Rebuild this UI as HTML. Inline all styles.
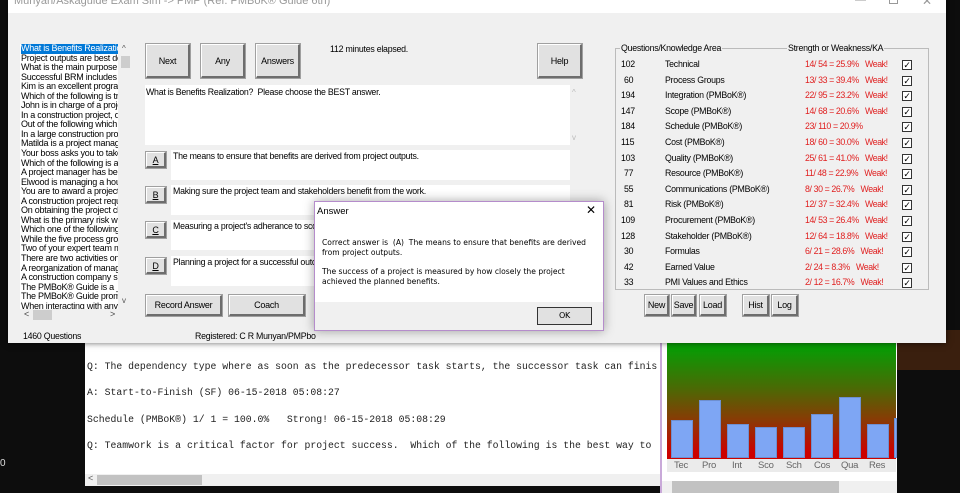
<!DOCTYPE html>
<html><head><meta charset="utf-8"><style>
*{margin:0;padding:0;box-sizing:border-box}
body{width:960px;height:493px;overflow:hidden;background:#0d0d0d;position:relative;font-family:"Liberation Sans",sans-serif;font-size:8.8px;letter-spacing:-.25px;color:#000}
.a{position:absolute;white-space:nowrap}
.btn{position:absolute;background:#e1e1e1;border:1px solid #fff;border-right:2px solid #6d6d6d;border-bottom:2px solid #6d6d6d;outline:1px solid #a0a0a0;display:flex;align-items:center;justify-content:center;font-size:9px}
.box{position:absolute;background:#fff;white-space:nowrap}
.mono{font-family:"Liberation Mono",monospace;font-size:9.8px;letter-spacing:0;color:#222;white-space:pre}
.red{color:#e02020}
.cb{position:absolute;width:10px;height:10px;border:1px solid #333;background:#fff;font-size:9px;line-height:8px;text-align:center}
.bar{position:absolute;background:#7ea6f4;border:1px solid #6e8fd0;width:22px}
</style></head><body>
<!-- background terminal -->
<div class="box" style="left:85px;top:330px;width:575px;height:156px"></div>
<div class="a mono" style="left:87px;top:333px">Cost (PMBoK®) 6/ 1 = 0.0%   Weak! 06-15-2018 05:08:25</div>
<div class="a mono" style="left:87px;top:361px">Q: The dependency type where as soon as the predecessor task starts, the successor task can finis</div>
<div class="a mono" style="left:87px;top:387px">A: Start-to-Finish (SF) 06-15-2018 05:08:27</div>
<div class="a mono" style="left:87px;top:414px">Schedule (PMBoK®) 1/ 1 = 100.0%   Strong! 06-15-2018 05:08:29</div>
<div class="a mono" style="left:87px;top:440px">Q: Teamwork is a critical factor for project success.  Which of the following is the best way to</div>
<div class="a" style="left:85px;top:474px;width:575px;height:12px;background:#f0f0f0"></div>
<div class="a" style="left:97px;top:475px;width:105px;height:10px;background:#c2c2c2"></div>
<div class="a" style="left:88px;top:473px;font-size:9px;color:#555">&lt;</div>
<div class="a" style="left:0;top:458px;color:#ddd;font-size:10px">0</div>
<!-- chart window -->
<div class="a" style="left:660px;top:330px;width:237px;height:163px;background:#fff;border-left:2px solid #c9a9d9"></div>
<div class="a" style="left:667px;top:330px;width:229px;height:129px;background:linear-gradient(#05a005 0%,#0a9a05 15%,#4a6a05 45%,#8a3a05 70%,#c00 95%)"></div>
<div class="bar" style="left:671px;top:420px;height:38px"></div>
<div class="bar" style="left:699px;top:400px;height:58px"></div>
<div class="bar" style="left:727px;top:424px;height:34px"></div>
<div class="bar" style="left:755px;top:427px;height:31px"></div>
<div class="bar" style="left:783px;top:427px;height:31px"></div>
<div class="bar" style="left:811px;top:414px;height:44px"></div>
<div class="bar" style="left:839px;top:397px;height:61px"></div>
<div class="bar" style="left:867px;top:424px;height:34px"></div>
<div class="bar" style="left:894px;top:418px;height:40px;width:3px"></div>
<div class="a" style="left:667px;top:459px;width:229px;height:13px;background:#ebebeb"></div>
<div class="a" style="left:674px;top:460px;font-size:9.5px;color:#666">Tec</div>
<div class="a" style="left:702px;top:460px;font-size:9.5px;color:#666">Pro</div>
<div class="a" style="left:732px;top:460px;font-size:9.5px;color:#666">Int</div>
<div class="a" style="left:758px;top:460px;font-size:9.5px;color:#666">Sco</div>
<div class="a" style="left:786px;top:460px;font-size:9.5px;color:#666">Sch</div>
<div class="a" style="left:814px;top:460px;font-size:9.5px;color:#666">Cos</div>
<div class="a" style="left:841px;top:460px;font-size:9.5px;color:#666">Qua</div>
<div class="a" style="left:869px;top:460px;font-size:9.5px;color:#666">Res</div>
<div class="a" style="left:662px;top:481px;width:235px;height:12px;background:#f0f0f0"></div>
<div class="a" style="left:672px;top:481px;width:167px;height:12px;background:#c2c2c2"></div>
<div class="a" style="left:897px;top:330px;width:63px;height:40px;background:#3a1f0e"></div>

<!-- main window -->
<div class="a" style="left:8px;top:0;width:938px;height:343px;background:#f0f0f0;box-shadow:0 0 6px rgba(0,0,0,.6)"></div>
<div class="a" style="left:8px;top:0;width:938px;height:13px;background:#fff"></div>
<div class="a" style="left:14px;top:-5px;font-size:11px;color:#999;letter-spacing:0">Munyan/Askaguide Exam Sim -&gt;  PMP (Ref. PMBoK® Guide 6th)</div>
<div class="a" style="left:855px;top:-6px;font-size:11px;color:#999">—</div>
<div class="a" style="left:889px;top:-4px;width:9px;height:8px;border:1px solid #999"></div>
<div class="a" style="left:922px;top:-6px;font-size:12px;color:#999">✕</div>

<!-- left list -->
<div class="box" style="left:20px;top:44px;width:98px;height:265px;overflow:hidden;line-height:9.55px;font-size:9px;padding-left:1px">
<div style="background:#0078d7;color:#fff;display:inline-block">What is Benefits Realization</div><br>
Project outputs are best des<br>What is the main purpose of<br>Successful BRM includes th<br>Kim is an excellent programr<br>Which of the following is tru<br>John is in charge of a projec<br>In a construction project, du<br>Out of the following which d<br>In a large construction proje<br>Matilda is a project manager<br>Your boss asks you to take<br>Which of the following is a c<br>A project manager has been<br>Elwood is managing a housi<br>You are to award a project t<br>A construction project requi<br>On obtaining the project cha<br>What is the primary risk with<br>Which one of the following i<br>While the five process group<br>Two of your expert team me<br>There are two activities on y<br>A reorganization of manager<br>A construction company spe<br>The PMBoK® Guide is a __<br>The PMBoK® Guide promot<br>When interacting with any s
</div>
<div class="a" style="left:118px;top:44px;width:12px;height:265px;background:#f0f0f0"></div>
<div class="a" style="left:121px;top:56px;width:9px;height:12px;background:#cdcdcd"></div>
<div class="a" style="left:122px;top:44px;font-size:8px;color:#555">^</div>
<div class="a" style="left:122px;top:296px;font-size:8px;color:#555">v</div>
<div class="a" style="left:20px;top:309px;width:110px;height:12px;background:#f0f0f0"></div>
<div class="a" style="left:33px;top:310px;width:19px;height:10px;background:#cdcdcd"></div>
<div class="a" style="left:24px;top:309px;font-size:9px;color:#444">&lt;</div>
<div class="a" style="left:110px;top:309px;font-size:9px;color:#444">&gt;</div>
<div class="a" style="left:23px;top:331px">1460 Questions</div>
<div class="a" style="left:195px;top:331px">Registered:  C R Munyan/PMPbo</div>

<!-- buttons -->
<div class="btn" style="left:146px;top:44px;width:44px;height:34px">Next</div>
<div class="btn" style="left:201px;top:44px;width:44px;height:34px">Any</div>
<div class="btn" style="left:256px;top:44px;width:44px;height:34px">Answers</div>
<div class="a" style="left:330px;top:44px">112 minutes elapsed.</div>
<div class="btn" style="left:538px;top:44px;width:44px;height:34px">Help</div>

<div class="box" style="left:145px;top:85px;width:425px;height:60px;padding:2px 1px">What is Benefits Realization?&nbsp; Please choose the BEST answer.</div>
<div class="a" style="left:572px;top:88px;font-size:8px;color:#bbb">^</div>
<div class="a" style="left:572px;top:133px;font-size:8px;color:#bbb">v</div>

<div class="btn" style="left:146px;top:152px;width:20px;height:16px;text-decoration:underline">A</div>
<div class="box" style="left:171px;top:150px;width:399px;height:30px;padding:1px 2px">The means to ensure that benefits are derived from project outputs.</div>
<div class="btn" style="left:146px;top:187px;width:20px;height:16px;text-decoration:underline">B</div>
<div class="box" style="left:171px;top:185px;width:399px;height:30px;padding:1px 2px">Making sure the project team and stakeholders benefit from the work.</div>
<div class="btn" style="left:146px;top:222px;width:20px;height:16px;text-decoration:underline">C</div>
<div class="box" style="left:171px;top:220px;width:399px;height:30px;padding:1px 2px">Measuring a project's adherance to scope</div>
<div class="btn" style="left:146px;top:258px;width:20px;height:16px;text-decoration:underline">D</div>
<div class="box" style="left:171px;top:256px;width:399px;height:30px;padding:1px 2px">Planning a project for a successful outcome</div>
<div class="btn" style="left:146px;top:295px;width:76px;height:21px">Record Answer</div>
<div class="btn" style="left:229px;top:295px;width:76px;height:21px">Coach</div>

<!-- right panel -->
<div class="a" style="left:615px;top:48px;width:314px;height:242px;border:1px solid #bbb"></div>
<div class="a" style="left:620px;top:43px;background:#f0f0f0;padding:0 1px">Questions/Knowledge Area</div>
<div class="a" style="left:787px;top:43px;background:#f0f0f0;padding:0 1px">Strength or Weakness/KA</div>
<div id="rows"></div>
<div class="btn" style="left:645px;top:295px;width:24px;height:21px">New</div>
<div class="btn" style="left:672px;top:295px;width:24px;height:21px">Save</div>
<div class="btn" style="left:700px;top:295px;width:26px;height:21px">Load</div>
<div class="btn" style="left:743px;top:295px;width:26px;height:21px">Hist</div>
<div class="btn" style="left:772px;top:295px;width:26px;height:21px">Log</div>

<!-- dialog -->
<div class="a" style="left:314px;top:201px;width:290px;height:130px;background:#fff;border:1px solid #b58ccb;box-shadow:0 0 10px rgba(0,0,0,.35)"></div>
<div class="a" style="left:317px;top:206px;font-size:9.5px;letter-spacing:0">Answer</div>
<div class="a" style="left:586px;top:203px;font-size:12px">✕</div>
<div class="a" style="left:322px;top:238px;font-family:'DejaVu Sans',sans-serif;font-size:7.6px;line-height:9.7px;letter-spacing:0;white-space:pre">Correct answer is  (A)  The means to ensure that benefits are derived
from project outputs.

The success of a project is measured by how closely the project
achieved the planned benefits.</div>
<div class="a" style="left:315px;top:302px;width:288px;height:28px;background:#f0f0f0"></div>
<div class="a" style="left:537px;top:307px;width:55px;height:18px;background:#e1e1e1;border:1px solid #333;font-family:'DejaVu Sans',sans-serif;font-size:8px;text-align:center;line-height:16px">OK</div>

<script>
var d=[["102","Technical","14/ 54 = 25.9%   Weak!"],["60","Process Groups","13/ 33 = 39.4%   Weak!"],["194","Integration (PMBoK®)","22/ 95 = 23.2%   Weak!"],["147","Scope (PMBoK®)","14/ 68 = 20.6%   Weak!"],["184","Schedule (PMBoK®)","23/ 110 = 20.9%"],["115","Cost (PMBoK®)","18/ 60 = 30.0%   Weak!"],["103","Quality (PMBoK®)","25/ 61 = 41.0%   Weak!"],["77","Resource (PMBoK®)","11/ 48 = 22.9%   Weak!"],["55","Communications (PMBoK®)","8/ 30 = 26.7%   Weak!"],["81","Risk (PMBoK®)","12/ 37 = 32.4%   Weak!"],["109","Procurement (PMBoK®)","14/ 53 = 26.4%   Weak!"],["128","Stakeholder (PMBoK®)","12/ 64 = 18.8%   Weak!"],["30","Formulas","6/ 21 = 28.6%   Weak!"],["42","Earned Value","2/ 24 = 8.3%   Weak!"],["33","PMI Values and Ethics","2/ 12 = 16.7%   Weak!"]];
var h="";d.forEach(function(r,i){var y=59+i*15.6;var x=r[0].length<3?624:621;
h+='<div class="a" style="left:'+x+'px;top:'+y+'px">'+r[0]+'</div><div class="a" style="left:665px;top:'+y+'px">'+r[1]+'</div><div class="a red" style="left:805px;top:'+y+'px;white-space:pre;letter-spacing:-.4px">'+r[2]+'</div><div class="cb" style="left:902px;top:'+(y+1)+'px">✓</div>';});
document.getElementById("rows").innerHTML=h;
</script>
</body></html>
